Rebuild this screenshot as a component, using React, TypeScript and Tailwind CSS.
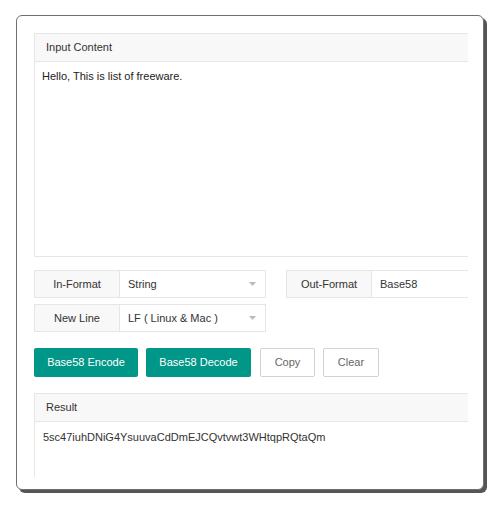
export default function App() {
  const font = "font-['Liberation_Sans',Arial,sans-serif]";

  const Caret = () => (
    <svg width="7" height="4" viewBox="0 0 7 4" className="ml-auto mr-[9px]">
      <path d="M0 0 L7 0 L3.5 4 Z" fill="#bbb" />
    </svg>
  );

  return (
    <div className={`w-[500px] h-[507px] bg-white pt-[15px] pl-[16px] ${font}`}>
      <div className="w-[468px] h-[475px] border border-[#6f6f6f] rounded-[6px] shadow-[3px_3px_0_#555] bg-white pt-[17px] pl-[17px]">
        <div className="w-[434px] overflow-hidden text-[11px] text-[#333]">
          {/* input panel */}
          <div className="w-[470px] border border-[#e6e6e6]">
            <div className="h-[28px] bg-[#f8f8f8] border-b border-[#e6e6e6] flex items-center pl-[11px]">
              Input Content
            </div>
            <div className="h-[194px] px-[7px] pt-[6px] text-[#222]">
              Hello, This is list of freeware.
            </div>
          </div>

          {/* format rows */}
          <div className="mt-[13px] flex gap-[20px]">
            <div className="flex flex-col gap-[6px]">
              <div className="w-[232px] h-[28px] flex border border-[#e6e6e6]">
                <div className="w-[85px] bg-[#f8f8f8] border-r border-[#e6e6e6] flex items-center justify-center">
                  In-Format
                </div>
                <div className="flex-1 flex items-center pl-[8px]">
                  String
                  <Caret />
                </div>
              </div>
              <div className="w-[232px] h-[28px] flex border border-[#e6e6e6]">
                <div className="w-[85px] bg-[#f8f8f8] border-r border-[#e6e6e6] flex items-center justify-center">
                  New Line
                </div>
                <div className="flex-1 flex items-center pl-[8px]">
                  LF ( Linux &amp; Mac )
                  <Caret />
                </div>
              </div>
            </div>
            <div className="w-[232px] h-[28px] flex border border-[#e6e6e6] shrink-0">
              <div className="w-[85px] bg-[#f8f8f8] border-r border-[#e6e6e6] flex items-center justify-center">
                Out-Format
              </div>
              <div className="flex-1 flex items-center pl-[8px]">Base58</div>
            </div>
          </div>

          {/* buttons */}
          <div className="mt-[16px] flex h-[29px]">
            <button className="w-[104px] rounded-[2px] bg-[#009688] text-white">Base58 Encode</button>
            <button className="ml-[8px] w-[105px] rounded-[2px] bg-[#009688] text-white">Base58 Decode</button>
            <button className="ml-[9px] w-[55px] rounded-[2px] border border-[#d2d2d2] bg-white text-[#666]">Copy</button>
            <button className="ml-[8px] w-[56px] rounded-[2px] border border-[#d2d2d2] bg-white text-[#666]">Clear</button>
          </div>

          {/* result panel */}
          <div className="mt-[16px] w-[470px] border-l border-t border-r border-[#e6e6e6]">
            <div className="h-[28px] bg-[#f8f8f8] border-b border-[#e6e6e6] flex items-center pl-[11px]">
              Result
            </div>
            <div className="h-[55px] px-[8px] pt-[7px]">
              5sc47iuhDNiG4YsuuvaCdDmEJCQvtvwt3WHtqpRQtaQm
            </div>
          </div>
        </div>
      </div>
    </div>
  );
}
